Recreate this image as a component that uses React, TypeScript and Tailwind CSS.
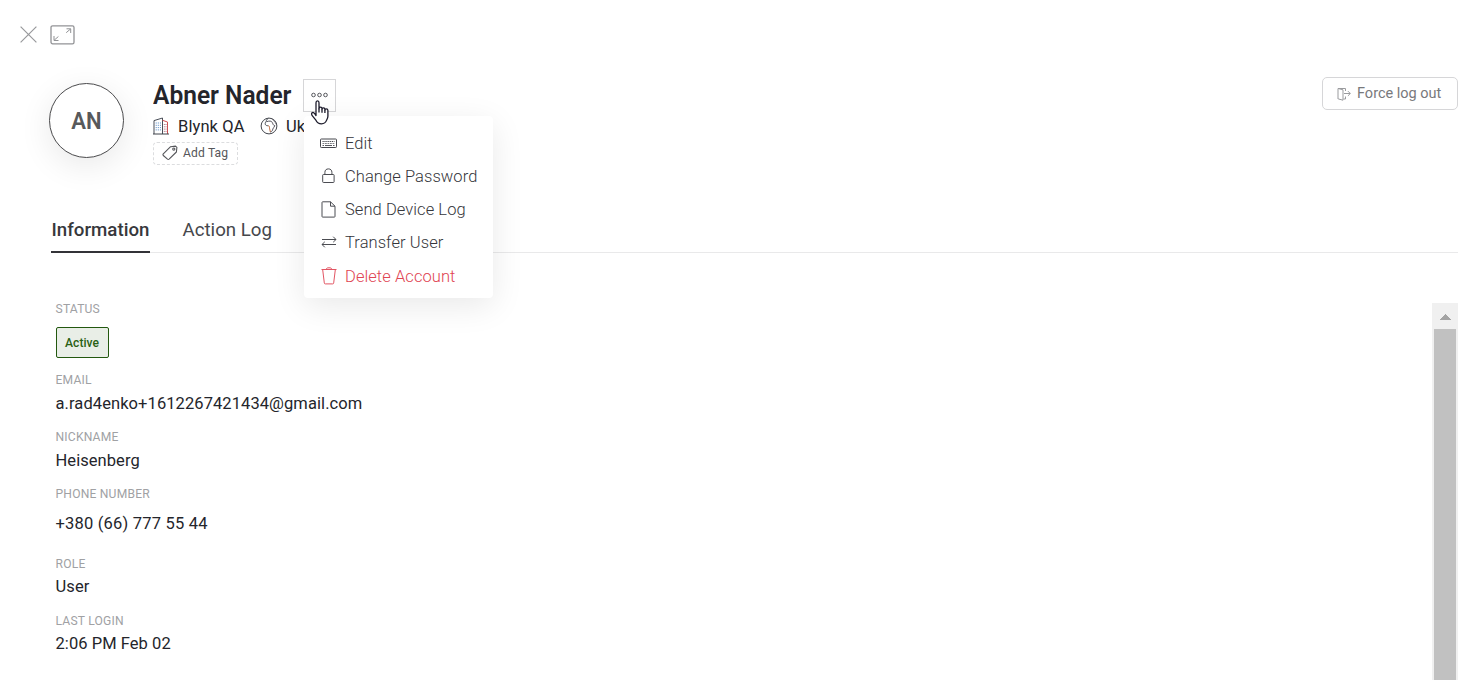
import type { ReactNode, SVGProps } from "react";

function Icon({ children, ...rest }: SVGProps<SVGSVGElement> & { children: ReactNode }) {
  return (
    <svg fill="none" stroke="currentColor" {...rest}>
      {children}
    </svg>
  );
}

const CloseIcon = () => (
  <Icon width="17" height="17" viewBox="0 0 17 17" className="text-[#98999c]" strokeWidth="1.2">
    <path d="M.6.6l15.8 15.8M16.4.6L.6 16.4" />
  </Icon>
);

const ExpandIcon = () => (
  <Icon width="25" height="20" viewBox="0 0 25 20" className="text-[#929396]">
    <rect x="1" y=".8" width="23" height="18" rx="1.6" strokeWidth="1.3" />
    <path d="M16.500 3.800h4.200v4.200M20.500 4l-4.300 3.700M4 11v4.500h4.500M4.200 15.200L8.400 11.500" strokeWidth="1" />
  </Icon>
);

const BuildingIcon = () => (
  <Icon width="17" height="18" viewBox="0 0 17 18" strokeWidth="1" className="shrink-0">
    <path d="M1 17V3.600L9.500 1v16" stroke="#484d57" />
    <path d="M9.500 3.300l5 1.700V17" stroke="#cf5054" />
    <path d="M0 17h16" stroke="#3f434b" />
    <path d="M3.200 5.500v9M5.300 5.500v9M7.400 5.500v9" stroke="#4f86c4" strokeDasharray="1 1.300" />
    <path d="M11.300 7v8M13 7v8" stroke="#b07080" strokeDasharray="1 1.300" />
  </Icon>
);

const GlobeIcon = () => (
  <Icon width="18" height="18" viewBox="0 0 18 18" strokeWidth="1" className="-ml-px mr-px shrink-0">
    <circle cx="9" cy="9" r="7.900" stroke="#43464d" />
    <path d="M8.300 1.300C6.900 2.300 6.500 3 6.200 4.300 5.400 5.400 5 6.200 5.300 7.300c.4 1.200 1.500 1.500 2.900 1.400" stroke="#4a5058" />
    <path d="M8.200 8.700c1.300.2 1.300 1.300 1.300 2.500.2 1.200.6 2.200.9 3.900" stroke="#c06a3c" />
    <path d="M10.400 15.100c1.700-.7 2.300-1.800 2.400-3.100.5-1.300 1.600-2 2-3.300-1.400-.2-1.700-1.400-2.200-2.500-.5-1.200-1-2-2.500-2.100-1.300.1-2.200 0-3.700.6" stroke="#54525c" />
    <path d="M12.300 2c.1 1.200 1.200 1.500 2 2.200.9.900 1.400 2 1.900 3.200" stroke="#54525c" strokeWidth=".7" />
  </Icon>
);

const TagIcon = () => (
  <Icon width="16" height="16" viewBox="0 0 16 16" strokeWidth="1.100" strokeLinejoin="round" className="-mt-px text-[#55565a]">
    <path d="M8.600 1.700l4.900-.6 1.400 1.200-.5 4.700-7.300 7.200c-.6.5-1 .5-1.600 0L1.300 10.500c-.5-.6-.5-1 0-1.600z" />
    <circle cx="11.800" cy="4.100" r="1.100" />
  </Icon>
);

const KeyboardIcon = () => (
  <Icon width="17" height="11" viewBox="0 0 17 11" strokeWidth="1" className="text-[#45464d]">
    <rect x=".5" y="1" width="16" height="8.500" rx=".8" />
    <path d="M2.500 3.500h12" strokeDasharray="1.200 .7" />
    <path d="M2.500 5.500h12" strokeDasharray="1.800 .7" strokeWidth=".7" />
    <path d="M2.500 7.500h1.500M5 7.500h7M13 7.500h1.500" strokeWidth=".9" />
  </Icon>
);

const LockIcon = () => (
  <Icon width="13" height="16" viewBox="0 0 13 16" strokeWidth="1" className="text-[#4b4c52]">
    <rect x=".7" y="6.500" width="11.400" height="8" rx=".7" />
    <path d="M2.900 6.500V4.300C2.900 2.200 4.200.9 6.400.9s3.500 1.300 3.500 3.400v2.200" />
  </Icon>
);

const FileIcon = () => (
  <Icon width="15" height="17" viewBox="0 0 15 17" strokeWidth="1" className="text-[#4b4c52]">
    <path d="M1 1.500c0-.4.200-.7.600-.7h7.900l4.500 4.400v10.200c0 .5-.2.700-.6.700H1.600c-.4 0-.6-.2-.6-.7zM9.500.8v4.400H14" />
  </Icon>
);

const TransferIcon = () => (
  <Icon width="16" height="12" viewBox="0 0 16 12" strokeWidth="1" className="-mt-px text-[#4b4c52]">
    <path d="M1 3.500h14M12.200.7L15 3.500l-2.800 2.700M15 8.500H1M3.800 5.800L1 8.500l2.800 2.800" />
  </Icon>
);

const TrashIcon = () => (
  <Icon width="16" height="18" viewBox="0 0 16 18" strokeWidth="1" className="-mt-px text-[#e25563]">
    <path d="M.5 2.500h15M5.200 2.300C5.500 1 6.300.8 8 .8s2.500.2 2.800 1.500M1.700 2.800l1.600 13.100c.1.700.4 1 1 1h7.400c.6 0 .9-.3 1-1l1.600-13.100" />
  </Icon>
);

const LogoutIcon = () => (
  <Icon width="14" height="14" viewBox="0 0 14 14" strokeWidth="1" className="text-[#9a9b9e]">
    <path d="M8.500 4V1.500H1v10.500M8.500 9.500V12H6.500M1.200 1.500L6 2.800v10.400l-4.800-1.300M7 6.500h6.200M10.900 4.100l2.400 2.400-2.400 2.400" />
  </Icon>
);

const HandCursor = () => (
  <svg width="19" height="25" viewBox="0 0 19 25" fill="#fff" stroke="#1c1b2b" strokeWidth="1.300" strokeLinejoin="round">
    <path d="M5 15.500V2.700C5 1.400 5.700.8 6.500.8S8 1.400 8 2.700v6.100c0-1.100.6-1.700 1.500-1.700.8 0 1.500.6 1.500 1.700v.7c0-1 .6-1.600 1.400-1.600.9 0 1.500.6 1.500 1.600v.8c0-.9.600-1.400 1.300-1.400.8 0 1.700.5 1.700 1.500v5.800c0 1.800-.7 2.800-1.300 3.900-.8 2.200-2.400 3.700-5.100 3.700-3 0-4.500-1.400-5.600-3.600L1.200 15.700c-.7-1.300-.8-2.300-.1-2.900.8-.6 1.800-.2 2.600.9z" />
    <path d="M8 8.500v4M11 9.500v3.300M13.900 10.200v2.800" fill="none" />
  </svg>
);

const menu = [
  { label: "Edit", icon: <KeyboardIcon /> },
  { label: "Change Password", icon: <LockIcon /> },
  { label: "Send Device Log", icon: <FileIcon /> },
  { label: "Transfer User", icon: <TransferIcon /> },
];

function MenuItem({ label, icon, danger }: { label: string; icon: ReactNode; danger?: boolean }) {
  return (
    <button
      className={`flex w-full items-center whitespace-nowrap pl-4 text-[16.500px] font-light tracking-[0.070px] ${
        danger ? "h-[35px] text-[#e04452]" : "h-[33px] text-[#35363b]"
      }`}
    >
      <span className="-mt-px flex w-[17px] shrink-0 justify-center">{icon}</span>
      <span className="ml-2 pt-px">{label}</span>
    </button>
  );
}

function Field({ label, children, className }: { label: string; children: ReactNode; className: string }) {
  return (
    <div>
      <div className="flex h-5 items-center text-[12.100px] tracking-[0.200px] text-[#a0a1a4]">{label}</div>
      <div className={`flex items-center pt-[2px] text-[16.500px] text-[#24252b] ${className}`}>{children}</div>
    </div>
  );
}

export default function App() {
  return (
    <div className="flex h-[680px] w-[1480px] flex-col overflow-hidden bg-white font-[Roboto,sans-serif] text-[#24252b]">
      <div className="flex h-[69px] shrink-0 items-center gap-[13px] pl-5">
        <CloseIcon />
        <ExpandIcon />
      </div>

      <header className="flex h-[138px] shrink-0 pl-[49px] pr-[22px]">
        <div className="mt-[14px] flex size-[75px] shrink-0 items-center justify-center rounded-full border border-[#4b4b4d] bg-white text-[24px] font-semibold text-[#58595b] shadow-[0_8px_33px_rgba(0,0,0,0.09)]">
          <span className="scale-x-[0.920]">AN</span>
        </div>
        <div className="ml-[29px] mt-[10px] flex flex-col">
          <div className="flex h-[33px] items-center">
            <h1 className="w-[150px] origin-left scale-x-[0.930] whitespace-nowrap text-[26.400px] font-semibold leading-none text-[#24252b]">
              Abner Nader
            </h1>
            <div className="relative">
              <button className="flex size-[33px] items-center justify-center border border-[#d6d6d8] bg-white pb-[2px]">
                <Icon width="17" height="6" viewBox="0 0 17 6" strokeWidth="1" className="text-[#55565c]">
                  <circle cx="2.500" cy="3" r="1.800" />
                  <circle cx="8.500" cy="3" r="1.800" />
                  <circle cx="14.500" cy="3" r="1.800" />
                </Icon>
              </button>
              <div className="absolute left-px top-[37px] z-10 h-[182px] w-[189px] rounded-[4px] bg-white pt-[11px] shadow-[0_8px_33px_rgba(0,0,0,0.09)]">
                {menu.map((item) => (
                  <MenuItem key={item.label} label={item.label} icon={item.icon} />
                ))}
                <MenuItem label="Delete Account" icon={<TrashIcon />} danger />
              </div>
              <div className="absolute left-[8px] top-[21px] z-20">
                <HandCursor />
              </div>
            </div>
          </div>
          <div className="mt-[5px] flex h-[18px] items-center text-[16.500px] leading-none">
            <BuildingIcon />
            <span className="ml-2 w-[76px] whitespace-nowrap pt-[2px] tracking-[0.100px]">Blynk QA</span>
            <span className="ml-[7px] flex">
              <GlobeIcon />
            </span>
            <span className="ml-[7px] pt-[2px]">Ukraine</span>
          </div>
          <button className="mt-[7px] flex h-[23px] w-[85px] items-center rounded-[4px] border border-dashed border-[#dcdddf] pl-2 text-[12.100px] tracking-[0.150px] text-[#55565a]">
            <TagIcon />
            <span className="ml-[5px] whitespace-nowrap">Add Tag</span>
          </button>
        </div>
        <button className="ml-auto mt-2 flex h-[33px] w-[136px] items-center rounded-[5px] border border-[#d6d6d8] bg-white pl-[14px] text-[14.500px] text-[#78797c]">
          <LogoutIcon />
          <span className="ml-[6px] whitespace-nowrap">Force log out</span>
        </button>
      </header>

      <nav className="ml-[51px] mr-[22px] flex h-[46px] shrink-0 border-b border-[#e9e9ea] text-[18.700px]">
        <div className="flex h-[46px] w-[99px] shrink-0 justify-center border-b-2 border-[#333338] pt-[9px] font-medium text-[#37383c]">
          Information
        </div>
        <div className="ml-[32.500px] pt-[9px] text-[#46474c]">Action Log</div>
      </nav>

      <main className="flex flex-1 pl-[55.500px] pr-[22px]">
        <section className="mt-[46px] flex flex-1 flex-col">
          <div className="mb-3">
            <div className="flex h-5 items-center text-[12.100px] tracking-[0.200px] text-[#a0a1a4]">STATUS</div>
            <div className="mt-2 flex h-[31px] w-[53px] items-center justify-center rounded-[2px] border border-[#23580f] bg-[#e9eee7] pt-px text-[12.100px] font-medium text-[#2a6114]">
              Active
            </div>
          </div>
          <Field label="EMAIL" className="mb-[11px] h-[26px] tracking-[0.080px]">
            a.rad4enko+1612267421434@gmail.com
          </Field>
          <Field label="NICKNAME" className="mb-[11px] h-[26px] tracking-[0.060px]">
            Heisenberg
          </Field>
          <Field label="PHONE NUMBER" className="mb-3 h-[38px] tracking-[0.200px]">
            +380 (66) 777 55 44
          </Field>
          <Field label="ROLE" className="mb-[13px] h-6 tracking-[0.100px]">
            User
          </Field>
          <Field label="LAST LOGIN" className="h-6 tracking-[0.060px]">
            2:06 PM Feb 02
          </Field>
        </section>
        <div className="mt-[50px] flex w-[26px] flex-col items-center bg-[#f0f0f0]">
          <div className="flex h-[26px] shrink-0 items-center pt-[2px]">
            <svg width="12" height="6" viewBox="0 0 12 6" shapeRendering="crispEdges">
              <path d="M0 6L6 0l6 6z" fill="#a3a3a3" />
            </svg>
          </div>
          <div className="w-[22px] flex-1 bg-[#c1c1c1]" />
        </div>
      </main>
    </div>
  );
}
